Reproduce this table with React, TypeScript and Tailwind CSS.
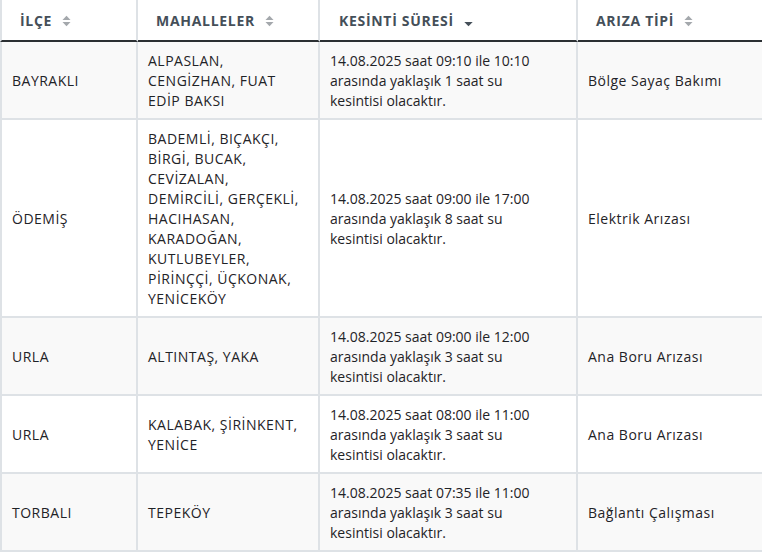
import React from "react";

type Row = { ilce: string; mah: string[]; kes: string[]; tip: string };

const rows: Row[] = [
  {
    ilce: "BAYRAKLI",
    mah: ["ALPASLAN,", "CENGİZHAN, FUAT", "EDİP BAKSI"],
    kes: ["14.08.2025 saat 09:10 ile 10:10", "arasında yaklaşık 1 saat su", "kesintisi olacaktır."],
    tip: "Bölge Sayaç Bakımı",
  },
  {
    ilce: "ÖDEMİŞ",
    mah: [
      "BADEMLİ, BIÇAKÇI,",
      "BİRGİ, BUCAK,",
      "CEVİZALAN,",
      "DEMİRCİLİ, GERÇEKLİ,",
      "HACIHASAN,",
      "KARADOĞAN,",
      "KUTLUBEYLER,",
      "PİRİNÇÇİ, ÜÇKONAK,",
      "YENİCEKÖY",
    ],
    kes: ["14.08.2025 saat 09:00 ile 17:00", "arasında yaklaşık 8 saat su", "kesintisi olacaktır."],
    tip: "Elektrik Arızası",
  },
  {
    ilce: "URLA",
    mah: ["ALTINTAŞ, YAKA"],
    kes: ["14.08.2025 saat 09:00 ile 12:00", "arasında yaklaşık 3 saat su", "kesintisi olacaktır."],
    tip: "Ana Boru Arızası",
  },
  {
    ilce: "URLA",
    mah: ["KALABAK, ŞİRİNKENT,", "YENİCE"],
    kes: ["14.08.2025 saat 08:00 ile 11:00", "arasında yaklaşık 3 saat su", "kesintisi olacaktır."],
    tip: "Ana Boru Arızası",
  },
  {
    ilce: "TORBALI",
    mah: ["TEPEKÖY"],
    kes: ["14.08.2025 saat 07:35 ile 11:00", "arasında yaklaşık 3 saat su", "kesintisi olacaktır."],
    tip: "Bağlantı Çalışması",
  },
];

function SortBoth() {
  return (
    <svg width="9" height="12" viewBox="0 0 9 12" className="ml-[10px] inline-block shrink-0">
      <path d="M0.5 5 L4.5 0.8 L8.5 5 Z" fill="#a4a8ac" />
      <path d="M0.5 7 L4.5 11.2 L8.5 7 Z" fill="#a4a8ac" />
    </svg>
  );
}

function SortDesc() {
  return (
    <svg width="9" height="12" viewBox="0 0 9 12" className="ml-[10px] inline-block shrink-0">
      <path d="M0.3 7 L4.5 11.2 L8.7 7 Z" fill="#454f59" />
    </svg>
  );
}

function Lines({ lines }: { lines: string[] }) {
  return (
    <>
      {lines.map((l, i) => (
        <div key={i} className="whitespace-nowrap">
          {l}
        </div>
      ))}
    </>
  );
}

export default function App() {
  const th =
    "h-[42px] px-[18px] pt-[1px] text-left align-middle border-r-2 border-b-2 border-r-[#dee2e6] border-b-[#2b2f33] text-[14px] font-bold tracking-[0.7px] text-[#454f59]";
  const td = "px-[10px] pt-[9px] pb-[7px] align-middle border-r-2 border-b-2 border-[#dee2e6] leading-5";
  return (
    <div
      className="w-[762px] h-[552px] overflow-hidden bg-white text-[#1f2327] text-[14px]"
      style={{ fontFamily: "'Open Sans', 'Noto Sans', sans-serif" }}
    >
      <table className="w-[764px] table-fixed border-separate border-spacing-0">
        <colgroup>
          <col className="w-[138px]" />
          <col className="w-[182px]" />
          <col className="w-[258px]" />
          <col className="w-[186px]" />
        </colgroup>
        <thead>
          <tr>
            <th className={th + " border-l-2 border-l-[#dee2e6]"}>
              <span className="flex items-center">İLÇE<SortBoth /></span>
            </th>
            <th className={th}>
              <span className="flex items-center">MAHALLELER<SortBoth /></span>
            </th>
            <th className={th + " pl-[19px]"}>
              <span className="flex items-center">KESİNTİ SÜRESİ<SortDesc /></span>
            </th>
            <th className={th}>
              <span className="flex items-center">ARIZA TİPİ<SortBoth /></span>
            </th>
          </tr>
        </thead>
        <tbody>
          {rows.map((r, i) => (
            <tr key={i} className={i % 2 === 0 ? "bg-[#f9f9f9]" : "bg-white"}>
              <td className={td + " border-l-2 tracking-[0.5px]"}>{r.ilce}</td>
              <td className={td + " tracking-[0.5px]"}>
                <Lines lines={r.mah} />
              </td>
              <td className={td}>
                <Lines lines={r.kes} />
              </td>
              <td className={td + " tracking-[0.5px]"}>{r.tip}</td>
            </tr>
          ))}
        </tbody>
      </table>
    </div>
  );
}
